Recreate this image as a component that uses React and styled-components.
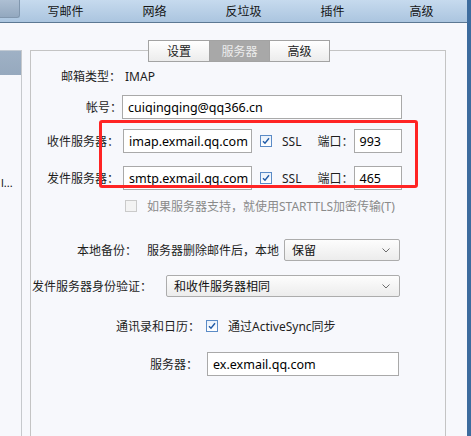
import React from "react";
import styled, { createGlobalStyle } from "styled-components";

const Global = createGlobalStyle`
  html, body { margin: 0; padding: 0; }
  body {
    background: #f7f8fc;
    font-family: "Noto Sans", "Noto Sans CJK SC", sans-serif;
    font-size: 12px;
    color: #1e1e1e;
  }
`;

const Window = styled.div`
  width: 471px;
  height: 436px;
  display: flex;
  overflow: hidden;
  background: #f7f8fc;
`;

const MainCol = styled.div`
  flex: 1;
  display: flex;
  flex-direction: column;
  min-width: 0;
`;

const EdgeStrip = styled.div`
  width: 4px;
  background: #3d6c9e;
`;

const TopBar = styled.div`
  height: 22px;
  display: flex;
  background: linear-gradient(#c6daee, #abc5df);
  border-bottom: 1px solid #5c7893;
`;

const CornerButton = styled.div`
  width: 20px;
  height: 18px;
  box-sizing: border-box;
  background: linear-gradient(#adbfd3, #93a8bf);
  border: 1px solid #8197ae;
  border-top: none;
  border-left: none;
  border-radius: 0 0 3px 0;
  margin-right: 1px;
`;

const TopTab = styled.div`
  width: 89px;
  display: flex;
  align-items: center;
  justify-content: center;
  font-size: 12px;
  color: #151515;
`;

const Body = styled.div`
  flex: 1;
  display: flex;
  min-height: 0;
`;

const LeftPane = styled.div`
  width: 21px;
  margin-top: 27px;
  border-right: 1px solid #c6c9cd;
  display: flex;
  flex-direction: column;
`;

const LeftItem = styled.div`
  height: 25px;
  box-sizing: border-box;
  border-top: 1px solid #c2cad3;
  background: linear-gradient(#9fb1c5, #96a9be);
`;

const LeftText = styled.div`
  margin-top: 100px;
  white-space: nowrap;
  font-size: 11px;
  line-height: 16px;
  padding-left: 1px;
  color: #111;
`;

const Content = styled.div`
  flex: 1;
  padding-left: 8px;
  display: flex;
  flex-direction: column;
`;

const GroupBox = styled.div`
  position: relative;
  width: 416px;
  box-sizing: border-box;
  margin-top: 27px;
  flex: 1;
  border: 1px solid #c4c4c4;
  border-bottom: none;
  display: flex;
  flex-direction: column;
`;

const TabStrip = styled.div`
  align-self: center;
  margin-top: -11px;
  margin-left: 2px;
  display: flex;
  border: 1px solid #a3a3a3;
  background: #fff;
`;

const Tab = styled.div`
  width: 60px;
  height: 20px;
  display: flex;
  align-items: center;
  justify-content: center;
  font-size: 12px;
  box-sizing: border-box;
  border-left: ${(p) => (p.$first ? "none" : "1px solid #a3a3a3")};
  background: ${(p) =>
    p.$active ? "#a8a8a8" : "linear-gradient(#ffffff, #ececec)"};
  color: ${(p) => (p.$active ? "#ececec" : "#222")};
`;

const Row = styled.div`
  display: flex;
  align-items: center;
  height: ${(p) => p.$h || 24}px;
  margin-top: ${(p) => p.$mt}px;
  padding-left: ${(p) => p.$pl}px;
  white-space: nowrap;
`;

const Label = styled.span`
  color: #1e1e1e;
`;

const Value = styled.span`
  margin-left: ${(p) => p.$ml || 0}px;
  color: ${(p) => (p.$muted ? "#8a8a8a" : "#1e1e1e")};
`;

const Input = styled.div`
  width: ${(p) => p.$w}px;
  height: 24px;
  margin-left: ${(p) => p.$ml || 0}px;
  box-sizing: border-box;
  border: 1px solid #a9a9a9;
  background: #fff;
  display: flex;
  align-items: center;
  padding-left: 5px;
  font-size: 12.5px;
  color: #000;
  overflow: hidden;
`;

const Select = styled.div`
  width: ${(p) => p.$w}px;
  height: 22px;
  margin-left: ${(p) => p.$ml || 0}px;
  box-sizing: border-box;
  border: 1px solid #acacac;
  border-radius: 2px;
  background: linear-gradient(#fdfdfd, #ececec);
  display: flex;
  align-items: center;
  justify-content: space-between;
  padding: 0 9px 0 7px;
  color: #111;
`;

const Check = styled.div`
  width: 12px;
  height: 12px;
  margin-left: ${(p) => p.$ml || 0}px;
  box-sizing: border-box;
  border: 1px solid ${(p) => (p.$disabled ? "#cacaca" : "#5b8bc6")};
  background: ${(p) =>
    p.$disabled ? "#f3f3f3" : "linear-gradient(#e9f1fb, #ffffff)"};
  display: flex;
  align-items: center;
  justify-content: center;
  flex-shrink: 0;
`;

const Highlight = styled.div`
  position: absolute;
  left: 68px;
  top: 69px;
  width: 319px;
  height: 68px;
  box-sizing: border-box;
  border: 3px solid #ff2424;
  border-radius: 3px;
  pointer-events: none;
`;

const Tick = () => (
  <svg width="8" height="8" viewBox="0 0 8 8">
    <polyline points="1,4.2 3,6.3 7,1.3" fill="none" stroke="#1f5aa6" strokeWidth="1.4" />
  </svg>
);

const Chevron = () => (
  <svg width="8" height="5" viewBox="0 0 8 5">
    <polyline points="0.5,0.5 4,4 7.5,0.5" fill="none" stroke="#6d6d6d" strokeWidth="1" />
  </svg>
);

export default function App() {
  return (
    <>
      <Global />
      <Window>
        <MainCol>
          <TopBar>
            <CornerButton />
            {["写邮件", "网络", "反垃圾", "插件", "高级"].map((t) => (
              <TopTab key={t}>{t}</TopTab>
            ))}
          </TopBar>
          <Body>
            <LeftPane>
              <LeftItem />
              <LeftText>l...</LeftText>
            </LeftPane>
            <Content>
              <GroupBox>
                <TabStrip>
                  <Tab $first>设置</Tab>
                  <Tab $active>服务器</Tab>
                  <Tab>高级</Tab>
                </TabStrip>

                <Row $mt={2} $pl={30}>
                  <Label>邮箱类型：</Label>
                  <Value $ml={4}>IMAP</Value>
                </Row>

                <Row $mt={7} $pl={55}>
                  <Label>帐号：</Label>
                  <Input $w={280}>cuiqingqing@qq366.cn</Input>
                </Row>

                <Row $mt={10} $pl={16}>
                  <Label>收件服务器：</Label>
                  <Input $w={129} $ml={4}>imap.exmail.qq.com</Input>
                  <Check $ml={8}><Tick /></Check>
                  <Value $ml={10}>SSL</Value>
                  <Value $ml={16}>端口：</Value>
                  <Input $w={48}>993</Input>
                </Row>

                <Row $mt={13} $pl={16}>
                  <Label>发件服务器：</Label>
                  <Input $w={129} $ml={4}>smtp.exmail.qq.com</Input>
                  <Check $ml={8}><Tick /></Check>
                  <Value $ml={10}>SSL</Value>
                  <Value $ml={16}>端口：</Value>
                  <Input $w={48}>465</Input>
                </Row>

                <Row $mt={4} $pl={94}>
                  <Check $disabled />
                  <Value $ml={10} $muted>
                    如果服务器支持，就使用STARTTLS加密传输(T)
                  </Value>
                </Row>

                <Row $mt={21} $h={22} $pl={46}>
                  <Label>本地备份：</Label>
                  <Value $ml={10}>服务器删除邮件后，本地</Value>
                  <Select $w={116} $ml={5}>
                    保留
                    <Chevron />
                  </Select>
                </Row>

                <Row $mt={14} $h={22} $pl={1}>
                  <Label>发件服务器身份验证：</Label>
                  <Select $w={234} $ml={14}>
                    和收件服务器相同
                    <Chevron />
                  </Select>
                </Row>

                <Row $mt={17} $pl={85}>
                  <Label>通讯录和日历：</Label>
                  <Check $ml={6}><Tick /></Check>
                  <Value $ml={10}>通过ActiveSync同步</Value>
                </Row>

                <Row $mt={14} $pl={119}>
                  <Label>服务器：</Label>
                  <Input $w={192} $ml={9}>ex.exmail.qq.com</Input>
                </Row>

                <Highlight />
              </GroupBox>
            </Content>
          </Body>
        </MainCol>
        <EdgeStrip />
      </Window>
    </>
  );
}
